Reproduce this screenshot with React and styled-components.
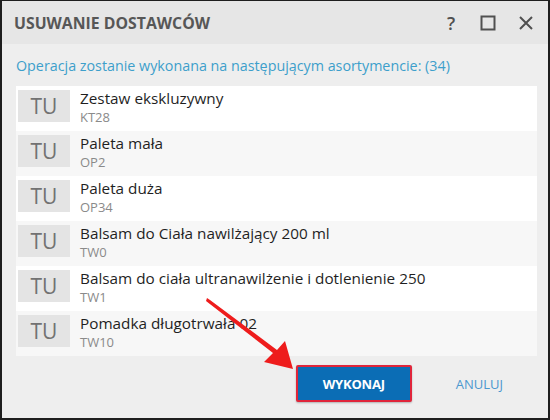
import React from "react";
import styled, { createGlobalStyle } from "styled-components";

const Global = createGlobalStyle`
  html, body { margin: 0; padding: 0; background: #ffffff; }
  * { box-sizing: border-box; }
`;

const Frame = styled.div`
  position: relative;
  width: 550px;
  height: 420px;
  border: 2px solid #1e1e1e;
  border-top-width: 1px;
  background: #eeeeee;
  display: flex;
  flex-direction: column;
  font-family: "Open Sans", "Noto Sans", sans-serif;
  overflow: hidden;
`;

const TitleBar = styled.div`
  height: 43px;
  flex: none;
  background: #e6e6e6;
  display: flex;
  align-items: center;
  padding: 0 14px 0 12px;
`;

const Title = styled.div`
  flex: 1;
  font-size: 15.8px;
  font-weight: 700;
  color: #575757;
`;

const Controls = styled.div`
  display: flex;
  align-items: center;
  gap: 22px;
  color: #505050;
`;

const Question = styled.span`
  font-size: 18px;
  font-weight: 600;
  width: 14px;
  text-align: center;
  color: #505050;
`;

const Body = styled.div`
  flex: 1;
  display: flex;
  flex-direction: column;
  padding: 0 11px 0 14px;
`;

const Subtitle = styled.div`
  height: 42px;
  display: flex;
  align-items: center;
  font-size: 14.3px;
  color: #3d9fcb;
`;

const List = styled.div`
  background: #ffffff;
  display: flex;
  flex-direction: column;
`;

const Row = styled.div`
  height: 45px;
  display: flex;
  align-items: flex-start;
  gap: 10px;
  padding: 4px 0 0 2px;
  background: ${(p) => (p.$alt ? "#f7f7f7" : "#ffffff")};
`;

const Badge = styled.div`
  width: 52px;
  height: 32px;
  background: #e4e4e4;
  color: #727272;
  font-size: 21px;
  display: flex;
  align-items: center;
  justify-content: center;
  flex: none;
`;

const Texts = styled.div`
  display: flex;
  flex-direction: column;
  margin-top: -2px;
`;

const Name = styled.div`
  font-size: 15.3px;
  line-height: 20px;
  color: #1f1f1f;
`;

const Code = styled.div`
  font-size: 13px;
  line-height: 18px;
  color: #8a8a8a;
`;

const Footer = styled.div`
  flex: 1;
  display: flex;
  align-items: center;
  justify-content: flex-end;
  padding: 0 34px 7px 0;
  gap: 44px;
`;

const Primary = styled.button`
  width: 116px;
  height: 37px;
  background: #0b6db5;
  border: 2px solid #e0253a;
  border-radius: 2px;
  color: #ffffff;
  font-family: inherit;
  font-size: 13px;
  font-weight: 700;
  letter-spacing: -0.2px;
  box-shadow: 0 1px 2px rgba(0, 0, 0, 0.25);
`;

const Ghost = styled.button`
  background: transparent;
  border: none;
  padding: 0;
  color: #4b98cf;
  font-family: inherit;
  font-size: 13px;
  font-weight: 500;
`;

const Arrow = styled.svg`
  position: absolute;
  left: 0;
  top: 0;
  pointer-events: none;
`;

const items = [
  ["Zestaw ekskluzywny", "KT28"],
  ["Paleta mała", "OP2"],
  ["Paleta duża", "OP34"],
  ["Balsam do Ciała nawilżający 200 ml", "TW0"],
  ["Balsam do ciała ultranawilżenie i dotlenienie 250", "TW1"],
  ["Pomadka długotrwała 02", "TW10"],
];

export default function App() {
  return (
    <>
      <Global />
      <Frame>
        <TitleBar>
          <Title>USUWANIE DOSTAWCÓW</Title>
          <Controls>
            <Question>?</Question>
            <svg width="16" height="16" viewBox="0 0 16 16">
              <rect x="1.5" y="1.5" width="13" height="13" fill="none" stroke="#505050" strokeWidth="2" />
            </svg>
            <svg width="16" height="16" viewBox="0 0 16 16">
              <path d="M2 2 L14 14 M14 2 L2 14" stroke="#505050" strokeWidth="2" />
            </svg>
          </Controls>
        </TitleBar>
        <Body>
          <Subtitle>Operacja zostanie wykonana na następującym asortymencie: (34)</Subtitle>
          <List>
            {items.map(([n, c], i) => (
              <Row key={c} $alt={i % 2 === 1}>
                <Badge>TU</Badge>
                <Texts>
                  <Name>{n}</Name>
                  <Code>{c}</Code>
                </Texts>
              </Row>
            ))}
          </List>
          <Footer>
            <Primary>WYKONAJ</Primary>
            <Ghost>ANULUJ</Ghost>
          </Footer>
        </Body>
        <Arrow width="550" height="420" viewBox="0 0 550 420">
          <polygon
            points="205,297 208,299 275,349 283,340 291,368 262,361 271,352 204,300"
            fill="#ee1c1c"
          />
        </Arrow>
      </Frame>
    </>
  );
}
